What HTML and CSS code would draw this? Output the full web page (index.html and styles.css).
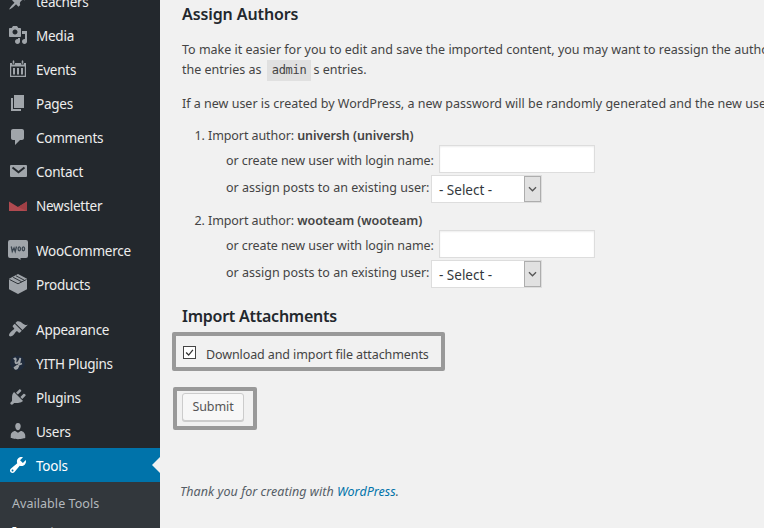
FILE: index.html
```
<!DOCTYPE html>
<html lang="en">
<head>
<meta charset="utf-8">
<title>Import WordPress</title>
<link rel="stylesheet" href="styles.css">
</head>
<body>
<div class="layout">
  <nav class="menu">
    <a class="item"><svg class="icon" viewBox="0 0 20 20"><path d="M10.44 3.02l1.82-1.82 6.36 6.35-1.83 1.82c-1.05-.68-2.48-.57-3.41.36l-.75.75c-.92.93-1.04 2.35-.35 3.41l-1.83 1.82-2.41-2.41-2.8 2.79c-.42.42-3.38 2.71-3.8 2.29s1.86-3.39 2.28-3.81l2.79-2.79L4.1 9.36l1.83-1.82c1.05.69 2.48.57 3.4-.36l.75-.75c.93-.92 1.05-2.35.36-3.41z"/></svg><span>teachers</span></a>
    <a class="item"><svg class="icon" viewBox="0 0 20 20"><path fill-rule="evenodd" d="M13 11V4c0-.55-.45-1-1-1h-1.67L9 1H5L3.67 3H2c-.55 0-1 .45-1 1v7c0 .55.45 1 1 1h10c.55 0 1-.45 1-1zM7 4.500c1.380 0 2.500 1.120 2.500 2.500S8.380 9.500 7 9.500 4.500 8.380 4.500 7 5.620 4.500 7 4.500zM14 6h5v10.500c0 1.380-1.120 2.500-2.500 2.500S14 17.880 14 16.500s1.120-2.500 2.500-2.500c.17 0 .34.02.5.05V9h-3V6zm-4 8.050V13h2v3.500c0 1.380-1.120 2.500-2.500 2.500S7 17.880 7 16.500 8.120 14 9.500 14c.17 0 .34.02.5.05z"/></svg><span>Media</span></a>
    <a class="item"><svg class="icon" viewBox="0 0 20 20"><path fill-rule="evenodd" d="M2 4h2v1.500h3V4h6v1.500h3V4h2v14H2zM3.200 7.500v9.300h13.600V7.500zM5 9h2v6.500H5zM9 9h2v6.500H9zM13 9h2v6.500h-2zM4.700 2q.8-1.300 1.600 0v2.800H4.700zM13.700 2q.8-1.300 1.600 0v2.800h-1.600z"/></svg><span>Events</span></a>
    <a class="item"><svg class="icon" viewBox="0 0 20 20"><path d="M6 15V2h10v13H6zm-1 1h8v2H3V5h2v11z"/></svg><span>Pages</span></a>
    <a class="item"><svg class="icon" viewBox="0 0 20 20"><path d="M5 2h9c1.100 0 2 .9 2 2v7c0 1.100-.9 2-2 2h-2l-5 5v-5H5c-1.100 0-2-.9-2-2V4c0-1.100.9-2 2-2z"/></svg><span>Comments</span></a>
    <a class="item"><svg class="icon" viewBox="0 0 20 20"><path d="M3 4h15q1 0 1 1v10q0 1-1 1H3q-1 0-1-1V5q0-1 1-1z"/><path class="cut" d="M4.500 6.500l6 4.800 6-4.800"/></svg><span>Contact</span></a>
    <a class="item"><svg class="icon red" viewBox="0 0 20 20"><path d="M1 6.500l9 5.500 9-5.500V16H1z"/><path class="shade" d="M19 6.500V16L10 12z"/></svg><span>Newsletter</span></a>
    <a class="item section"><svg class="icon" viewBox="0 0 20 20"><path d="M2 0h16q2 0 2 2v14q0 2-2 2h-5.500v2L9.500 18H2q-2 0-2-2V2q0-2 2-2z"/><path class="woo" d="M3.300 6.500l1 5L6 8l1.200 3.500L8.500 6.500"/><ellipse class="woo" cx="11.300" cy="8.800" rx="1.200" ry="2"/><ellipse class="woo" cx="15.400" cy="8.800" rx="1.200" ry="2"/></svg><span>WooCommerce</span></a>
    <a class="item"><svg class="icon" viewBox="0 0 20 20"><path d="M10 0l9 4.700v10.500L10 20l-9-4.800V4.700z"/><path class="seam" d="M1.500 5.500L10 9.800l8.500-4.300M5.200 3.300l8.500 4.500M8 1.800l8.500 4.500"/></svg><span>Products</span></a>
    <a class="item section"><svg class="icon" viewBox="0 0 20 20"><path d="M14.480 11.060L7.410 3.990l1.500-1.500c.5-.56 2.300-.47 3.510.32 1.210.8 1.430 1.280 2.910 2.100 1.180.64 2.450 1.260 4.450.85zm-.71.71L6.700 4.700 4.930 6.470c-.39.39-.39 1.020 0 1.410l1.060 1.060c.39.39.39 1.030 0 1.420-.6.6-1.430 1.110-2.210 1.690-.35.26-.7.53-1.010.84C1.430 14.230.4 16.080 1.400 17.070c.99 1 2.840-.03 4.180-1.360.31-.31.58-.66.85-1.020.57-.78 1.080-1.610 1.690-2.210.39-.39 1.020-.39 1.410 0l1.060 1.060c.39.39 1.020.39 1.410 0z"/></svg><span>Appearance</span></a>
    <a class="item"><svg class="icon" viewBox="0 0 20 20"><circle class="disc" cx="9.500" cy="10" r="7.500"/><path class="swash" d="M5.700 6.300q2.200-1.800 2.100.4-1 3.600.6 3.600Q11 9.800 12.300 5q-.7 6.500-3 10-1.800 1.800-2.700-.3 2.500-2.500 7.400-4.200"/></svg><span>YITH Plugins</span></a>
    <a class="item"><svg class="icon" viewBox="0 0 20 20"><path d="M13.110 4.360L9.870 7.600 8 5.730l3.240-3.240c.35-.34 1.050-.2 1.560.32.52.51.66 1.210.31 1.550zm-8 1.770l.91-1.120 9.010 9.010-1.190.84c-.71.71-2.630 1.160-3.820 1.160H6.140L4.900 17.260c-.59.59-1.540.59-2.120 0-.59-.58-.59-1.530 0-2.120l1.240-1.240v-3.880c0-1.130.4-3.190 1.090-3.890zm7.260 3.970l3.240-3.240c.34-.35 1.040-.21 1.550.31.52.51.66 1.210.31 1.550l-3.240 3.250z"/></svg><span>Plugins</span></a>
    <a class="item"><svg class="icon" viewBox="0 0 20 20"><path d="M10 9.250c-2.270 0-2.730-3.440-2.730-3.440C7 4.020 7.820 2 9.970 2c2.160 0 2.980 2.020 2.710 3.810 0 0-.41 3.440-2.680 3.440zm0 2.570L12.720 10c2.390 0 4.520 2.330 4.520 4.530v2.490s-3.650 1.130-7.240 1.130c-3.650 0-7.240-1.130-7.240-1.130v-2.490c0-2.250 1.940-4.480 4.470-4.480z"/></svg><span>Users</span></a>
    <a class="item current"><svg class="icon" viewBox="0 0 20 20"><path fill-rule="evenodd" d="M16.680 9.770c-1.340 1.340-3.300 1.670-4.950.99l-5.410 6.520c-.99.99-2.590.99-3.580 0s-.99-2.590 0-3.570l6.520-5.420c-.68-1.650-.35-3.610.99-4.950 1.280-1.280 3.120-1.620 4.720-1.060l-2.890 2.890 2.820 2.820 2.860-2.870c.53 1.580.18 3.390-1.080 4.650zM3.810 16.210c.4.39 1.040.39 1.430 0 .4-.4.4-1.040 0-1.430-.39-.4-1.030-.4-1.430 0-.39.39-.39 1.030 0 1.430z"/></svg><span>Tools</span></a>
    <div class="submenu"><a>Available Tools</a><a class="active">Import</a></div>
  </nav>
  <main class="content">
    <h3 class="t-authors">Assign Authors</h3>
    <p>To make it easier for you to edit and save the imported content, you may want to reassign the author of the<br>the entries as <code>admin</code>s entries.</p>
    <p>If a new user is created by WordPress, a new password will be randomly generated and the new user's</p>
    <ol class="authors">
      <li>
        <div class="author">Import author: <strong>universh (universh)</strong></div>
        <div class="row"><label class="t-login">or create new user with login name:</label><input class="login" type="text"></div>
        <div class="row"><label class="t-assign">or assign posts to an existing user:</label><div class="select"><span>- Select -</span><svg class="drop" viewBox="0 0 17 26"><path d="M4.500 11l4 4 4-4"/></svg></div></div>
      </li>
      <li>
        <div class="author">Import author: <strong>wooteam (wooteam)</strong></div>
        <div class="row"><label class="t-login">or create new user with login name:</label><input class="login" type="text"></div>
        <div class="row"><label class="t-assign">or assign posts to an existing user:</label><div class="select"><span>- Select -</span><svg class="drop" viewBox="0 0 17 26"><path d="M4.500 11l4 4 4-4"/></svg></div></div>
      </li>
    </ol>
    <h3 class="t-attach">Import Attachments</h3>
    <div class="mark mark-check"><svg class="check" viewBox="0 0 13 13"><path d="M2.500 6.500l3 3 5-6"/></svg><span class="t-download">Download and import file attachments</span></div>
    <div class="mark mark-submit"><button type="button">Submit</button></div>
    <footer>Thank you for creating with <a>WordPress</a>.</footer>
  </main>
</div>
</body>
</html>
```
FILE: styles.css
```
* { box-sizing: border-box; }
body {
  margin: 0;
  height: 528px;
  overflow: hidden;
  background: #f1f1f1;
  color: #444;
  font: 13px/20px "Noto Sans", "Open Sans", sans-serif;
}
.layout { display: flex; height: 528px; overflow: hidden; }

.menu { flex: none; width: 160px; margin-top: -16px; background: #23282d; }
.item {
  display: flex;
  position: relative;
  height: 34px;
  padding: 7px 0 0 8px;
  gap: 8px;
  color: #eee;
  font-size: 13.500px;
  line-height: 22px;
  letter-spacing: -0.250px;
}
.section { margin-top: 11px; }
.icon { flex: none; width: 20px; height: 20px; fill: #a0a5aa; overflow: visible; }
.cut { fill: none; stroke: #23282d; stroke-width: 2; }
.red { fill: #b04a50; }
.shade { fill: #a04046; }
.woo { fill: none; stroke: #3b4650; stroke-width: 1.300; }
.seam { fill: none; stroke: #23282d; stroke-width: .9; }
.disc { fill: #1f2a3a; }
.swash { fill: none; stroke: #a0a5aa; stroke-width: 1.800; }
.current { background: #0073aa; color: #fff; }
.current .icon { fill: #fff; }
.current::after {
  content: "";
  position: absolute;
  right: 0;
  top: 9px;
  border: 8px solid transparent;
  border-left-width: 0;
  border-right-color: #f1f1f1;
}
.submenu { display: flex; flex-direction: column; gap: 8px; height: 80px; padding: 12px 12px; background: #32373c; color: #b4b9be; font-size: 12.500px; letter-spacing: 0.050px; }
.active { color: #fff; font-weight: 600; }

.content { flex: none; width: 900px; padding: 4px 0 0 22px; white-space: nowrap; letter-spacing: -0.080px; font-size: 12.500px; }
h3 { margin: 0; color: #23282d; font-size: 16px; line-height: 20px; font-weight: 600; letter-spacing: -0.100px; }
p { margin: 16px 0 0; letter-spacing: 0; }
p + p { margin-top: 13px; }
code { display: inline-block; height: 21px; margin: 0 2px; padding: 0 5px; background: #e0e0e0; font: 12px/21px "DejaVu Sans Mono", monospace; letter-spacing: -0.300px; vertical-align: top; }

.authors { margin: 12px 0 0; padding: 0 0 0 26px; }
.authors li { height: 85px; }
.author strong { font-weight: 600; }
.row { display: flex; padding-left: 18px; }
.row label { flex: none; height: 30px; line-height: 30px; }
.login { width: 156px; height: 28px; margin: -1px 0 0; border: 1px solid #ddd; background: #fff; box-shadow: inset 0 1px 2px rgba(0,0,0,.07); }
.t-login { width: 213px; }
.t-assign { width: 205px; letter-spacing: 0; }
.row + .row { margin-top: -3px; }
.select { display: flex; justify-content: space-between; width: 111px; height: 28px; margin-top: 2px; border: 1px solid #ddd; background: #fff; color: #32373c; font-size: 13.500px; line-height: 28px; letter-spacing: 0; }
.select span { padding-left: 7px; }
.drop { width: 17px; height: 26px; background: #e1e1e1; border: 1px solid #adadad; fill: none; stroke: #555; stroke-width: 1.500; }

.t-attach { margin-top: 10px; letter-spacing: -0.250px; }
.mark { display: flex; border: 4px solid #999; border-radius: 2px; }
.mark-check { width: 273px; height: 39px; margin: 6px 0 0 -10px; padding: 10px 0 0 7px; gap: 10px; }
.check { width: 13px; height: 13px; border: 1px solid #444; background: #fff; fill: none; stroke: #333; stroke-width: 1.500; }
.t-download { margin-top: -1px; letter-spacing: -0.100px; }
.mark-submit { width: 84px; height: 43px; margin: 16px 0 0 -9px; padding: 2px 0 0 5px; }
button { width: 62px; height: 28px; padding: 0; border: 1px solid #ccc; border-radius: 3px; background: #f7f7f7; box-shadow: 0 1px 0 #ccc; color: #555; font: 12.500px/26px "Noto Sans", sans-serif; letter-spacing: -0.100px; }
footer { margin: 52px 0 0 -2px; color: #555d66; font-style: italic; letter-spacing: 0.050px; }
footer a { color: #0073aa; }
```
